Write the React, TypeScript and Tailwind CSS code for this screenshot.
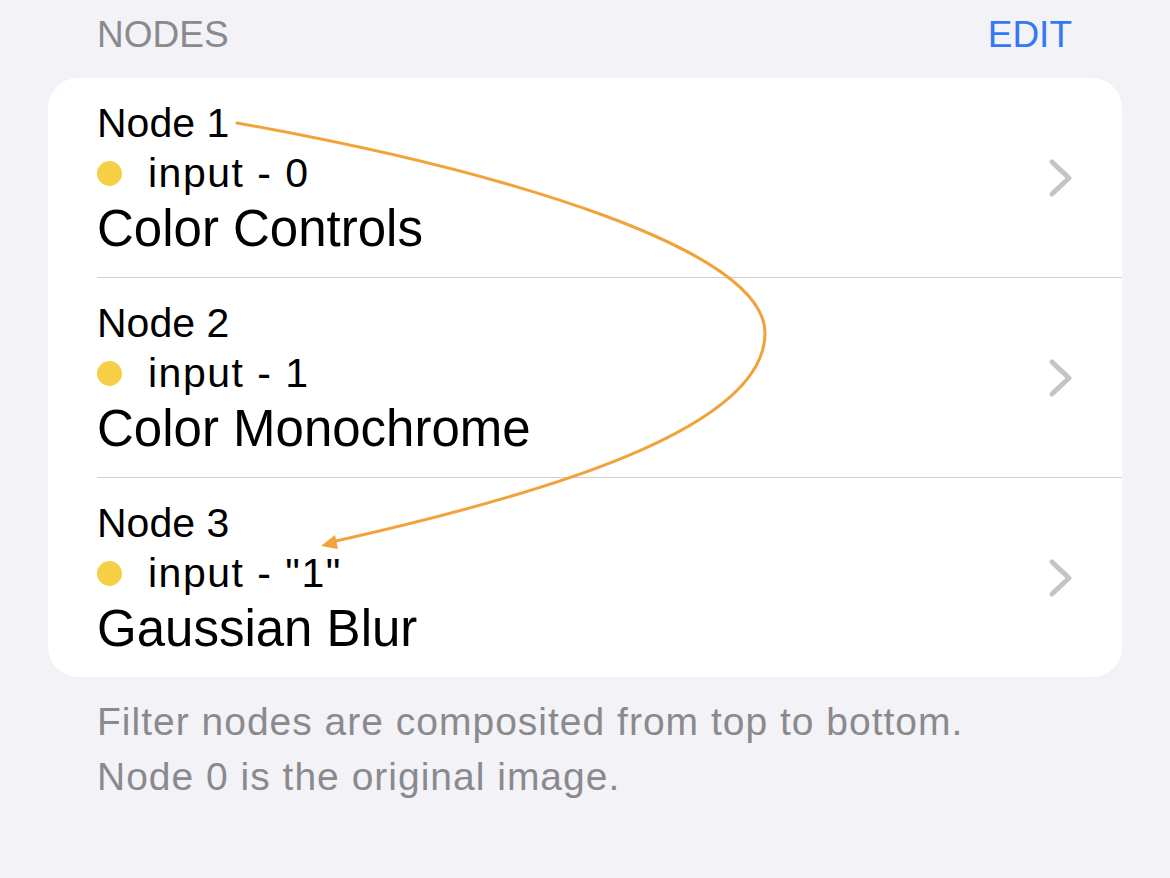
import React from "react";

type NodeRow = { title: string; input: string; name: string };

const rows: NodeRow[] = [
  { title: "Node 1", input: "input - 0", name: "Color Controls" },
  { title: "Node 2", input: "input - 1", name: "Color Monochrome" },
  { title: "Node 3", input: 'input - "1"', name: "Gaussian Blur" },
];

function Chevron() {
  return (
    <svg width="26" height="40" viewBox="0 0 26 40" className="shrink-0">
      <polyline
        points="4,4 21,20 4,36"
        fill="none"
        stroke="#c4c4c7"
        strokeWidth="5"
        strokeLinecap="round"
        strokeLinejoin="round"
      />
    </svg>
  );
}

function Row({ row, last }: { row: NodeRow; last: boolean }) {
  return (
    <div>
      <div className="flex h-[199px] items-center pl-[49px] pr-[48px]">
        <div className="flex-1 pt-[20px] self-start">
          <div className="text-[41px] leading-[50px] text-black">{row.title}</div>
          <div className="flex h-[50px] items-center">
            <span className="h-[25px] w-[25px] rounded-full bg-[#f7cf46]" />
            <span className="ml-[26px] text-[41px] leading-[50px] tracking-[1.5px] text-black">
              {row.input}
            </span>
          </div>
          <div className="text-[51px] leading-[61px] text-black">{row.name}</div>
        </div>
        <Chevron />
      </div>
      {!last && <div className="ml-[49px] h-px bg-[#cfcfd3]" />}
    </div>
  );
}

export default function App() {
  return (
    <div
      className="relative min-h-[878px] w-full overflow-hidden bg-[#f2f2f7]"
      style={{ fontFamily: '"Liberation Sans", Arial, sans-serif' }}
    >
      <div className="flex h-[78px] items-start justify-between pl-[97px] pr-[98px] pt-[14px]">
        <span className="text-[37px] leading-[41px] text-[#8a8a8e]">NODES</span>
        <span className="text-[37px] leading-[41px] text-[#3478f6]">EDIT</span>
      </div>

      <div className="mx-[48px] overflow-hidden rounded-[30px] bg-white">
        {rows.map((r, i) => (
          <Row key={r.title} row={r} last={i === rows.length - 1} />
        ))}
      </div>

      <div className="mt-[17px] pl-[97px] text-[39px] leading-[55px] tracking-[1px] text-[#8a8a8e]">
        <div>Filter nodes are composited from top to bottom.</div>
        <div>Node 0 is the original image.</div>
      </div>

      <svg
        className="pointer-events-none absolute left-0 top-0"
        width="1170"
        height="878"
        viewBox="0 0 1170 878"
      >
        <path
          d="M237 123 C 510 172, 765 250, 765 333 C 765 430, 540 495, 336 541"
          fill="none"
          stroke="#f0a33b"
          strokeWidth="3"
          strokeLinecap="round"
        />
        <polygon points="321,546 335,535 338,549" fill="#f0a33b" />
      </svg>
    </div>
  );
}
